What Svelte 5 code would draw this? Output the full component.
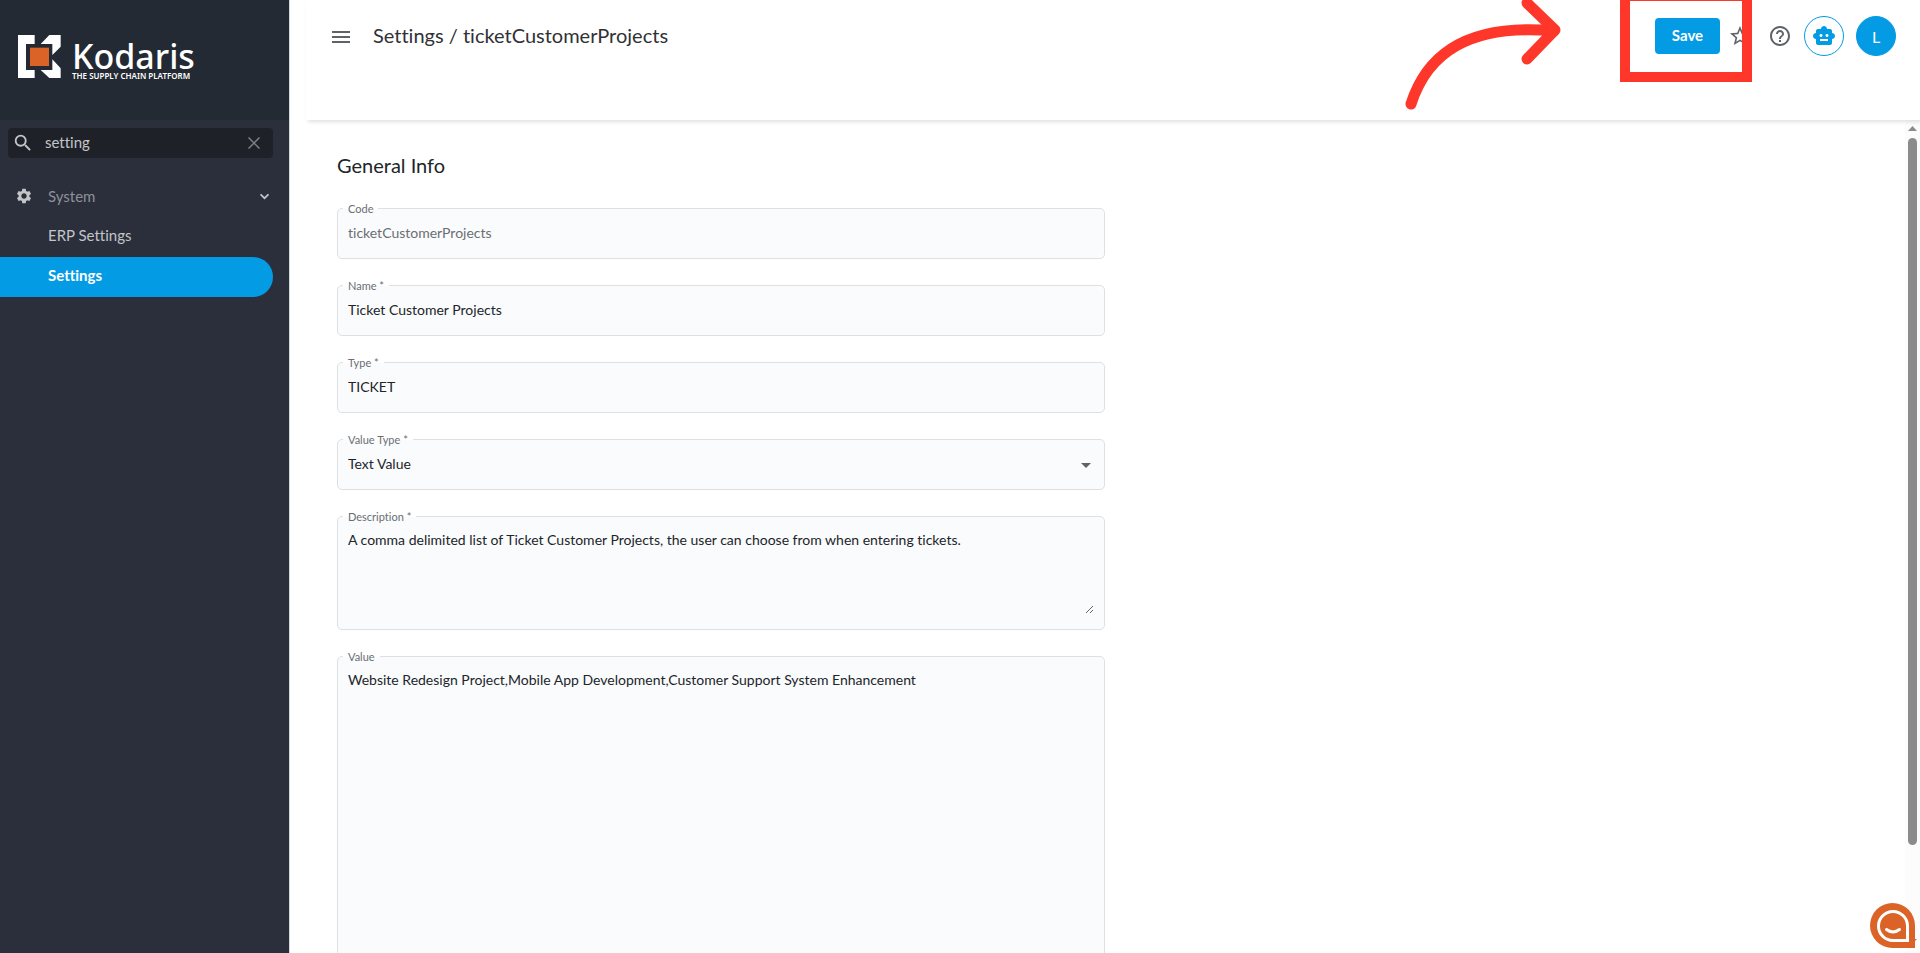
<script lang="ts">
    type Field = {
        id: string
        label: string
        value: string
        required?: boolean
        disabled?: boolean
        kind: 'input' | 'select' | 'textarea'
        size?: 'small' | 'large'
    }

    let search = $state('setting')
    let systemOpen = $state(true)

    const links = [
        { text: 'ERP Settings', active: false },
        { text: 'Settings', active: true }
    ]

    const fields: Field[] = $state([
        { id: 'code', label: 'Code', value: 'ticketCustomerProjects', kind: 'input', disabled: true },
        { id: 'name', label: 'Name', value: 'Ticket Customer Projects', kind: 'input', required: true },
        { id: 'type', label: 'Type', value: 'TICKET', kind: 'input', required: true },
        { id: 'valueType', label: 'Value Type', value: 'Text Value', kind: 'select', required: true },
        {
            id: 'description',
            label: 'Description',
            value: 'A comma delimited list of Ticket Customer Projects, the user can choose from when entering tickets.',
            kind: 'textarea',
            size: 'small',
            required: true
        },
        {
            id: 'value',
            label: 'Value',
            value: 'Website Redesign Project,Mobile App Development,Customer Support System Enhancement',
            kind: 'textarea',
            size: 'large'
        }
    ])
</script>

<div class="app">
    <aside class="sidebar">
        <a class="brand" href="#home" aria-label="Kodaris home">
            <svg class="brand-mark" viewBox="54 105 129 129" aria-hidden="true">
                <path fill="#fff" d="M54 105H104V132H78V210H104V234H54Z" />
                <path fill="#fff" d="M122 132L148 105H182V140L157 165V132Z" />
                <path fill="#fff" d="M157 178L182 205V234H148L122 210H157Z" />
                <path fill="#db6327" d="M90 143H147V198H90Z" />
            </svg>
            <span class="brand-text">
                <span class="brand-name">Kodaris</span>
                <span class="brand-tag">THE SUPPLY CHAIN PLATFORM</span>
            </span>
        </a>

        <div class="search">
            <svg class="search-icon" viewBox="0 0 24 24" aria-hidden="true">
                <path d="M15.5 14h-.79l-.28-.27A6.47 6.47 0 0 0 16 9.5 6.5 6.5 0 1 0 9.5 16c1.61 0 3.09-.59 4.23-1.57l.27.28v.79l5 4.99L20.49 19l-4.99-5zm-6 0C7.01 14 5 11.99 5 9.5S7.01 5 9.5 5 14 7.01 14 9.5 11.99 14 9.5 14z" />
            </svg>
            <input type="text" aria-label="Search menu" bind:value={search}>
            <button class="clear" aria-label="Clear search" onclick={() => (search = '')}>
                <svg viewBox="0 0 12 12" aria-hidden="true"><path d="M0.5 0.5L11.5 11.5M11.5 0.5L0.5 11.5" /></svg>
            </button>
        </div>

        <nav>
            <button class="group" aria-expanded={systemOpen} onclick={() => (systemOpen = !systemOpen)}>
                <svg class="gear" viewBox="0 0 24 24" aria-hidden="true">
                    <path d="M19.14 12.94c.04-.3.06-.61.06-.94 0-.32-.02-.64-.07-.94l2.03-1.58a.49.49 0 0 0 .12-.61l-1.92-3.32a.488.488 0 0 0-.59-.22l-2.39.96c-.5-.38-1.03-.7-1.62-.94l-.36-2.54a.484.484 0 0 0-.48-.41h-3.84c-.24 0-.43.17-.47.41l-.36 2.54c-.59.24-1.13.57-1.62.94l-2.39-.96c-.22-.08-.47 0-.59.22L2.74 8.87c-.12.21-.08.47.12.61l2.03 1.58c-.05.3-.09.63-.09.94s.02.64.07.94l-2.03 1.58a.49.49 0 0 0-.12.61l1.92 3.32c.12.22.37.29.59.22l2.39-.96c.5.38 1.03.7 1.62.94l.36 2.54c.05.24.24.41.48.41h3.84c.24 0 .44-.17.47-.41l.36-2.54c.59-.24 1.13-.56 1.62-.94l2.39.96c.22.08.47 0 .59-.22l1.92-3.32c.12-.22.07-.47-.12-.61l-2.01-1.58zM12 15.6c-1.98 0-3.6-1.62-3.6-3.6s1.62-3.6 3.6-3.6 3.6 1.62 3.6 3.6-1.62 3.6-3.6 3.6z" />
                </svg>
                <span>System</span>
                <svg class="chevron" viewBox="0 0 8 6" aria-hidden="true"><path d="M0.5 1L4 4.5L7.5 1" /></svg>
            </button>
            {#if systemOpen}
                {#each links as link}
                    <a class="link" class:active={link.active} href="#settings">{link.text}</a>
                {/each}
            {/if}
        </nav>
    </aside>

    <div class="page">
        <header>
            <button class="icon-button" aria-label="Toggle menu">
                <svg viewBox="0 0 24 24" aria-hidden="true"><path d="M3 18h18v-2H3v2zm0-5h18v-2H3v2zm0-7v2h18V6H3z" /></svg>
            </button>
            <h1>Settings / ticketCustomerProjects</h1>

            <div class="actions">
                <button class="save">Save</button>
                <button class="icon-button star" aria-label="Add to favorites">
                    <svg viewBox="0 0 24 24" aria-hidden="true">
                        <path d="M22 9.24l-7.19-.62L12 2 9.19 8.63 2 9.24l5.46 4.73L5.82 21 12 17.27 18.18 21l-1.63-7.03L22 9.24zM12 15.4l-3.76 2.27 1-4.28-3.32-2.88 4.38-.38L12 6.1l1.71 4.04 4.38.38-3.32 2.88 1 4.28L12 15.4z" />
                    </svg>
                </button>
                <button class="icon-button help" aria-label="Help">
                    <svg viewBox="0 0 24 24" aria-hidden="true">
                        <path d="M11 18h2v-2h-2v2zm1-16C6.48 2 2 6.48 2 12s4.48 10 10 10 10-4.48 10-10S17.52 2 12 2zm0 18c-4.41 0-8-3.59-8-8s3.59-8 8-8 8 3.59 8 8-3.59 8-8 8zm0-14c-2.21 0-4 1.79-4 4h2c0-1.1.9-2 2-2s2 .9 2 2c0 2-3 1.75-3 5h2c0-2.25 3-2.5 3-5 0-2.21-1.79-4-4-4z" />
                    </svg>
                </button>
                <button class="round outline" aria-label="Assistant">
                    <svg viewBox="0 0 24 24" aria-hidden="true">
                        <path d="M20 9V7c0-1.1-.9-2-2-2h-3c0-1.66-1.34-3-3-3S9 3.34 9 5H6c-1.1 0-2 .9-2 2v2c-1.66 0-3 1.34-3 3s1.34 3 3 3v4c0 1.1.9 2 2 2h12c1.1 0 2-.9 2-2v-4c1.66 0 3-1.34 3-3s-1.34-3-3-3zM7.5 11.5c0-.83.67-1.5 1.5-1.5s1.5.67 1.5 1.5S9.83 13 9 13s-1.5-.67-1.5-1.5zM16 17H8v-2h8v2zm-1-4c-.83 0-1.5-.67-1.5-1.5S14.17 10 15 10s1.5.67 1.5 1.5S15.83 13 15 13z" />
                    </svg>
                </button>
                <button class="round" aria-label="Account">L</button>
            </div>

            <div class="highlight"></div>
            <svg class="pointer" viewBox="0 0 170 112" aria-hidden="true">
                <path d="M11 104C27 54 68 23 154 31" />
                <path d="M127 3L155 30L127 59" />
            </svg>
        </header>

        <div class="body">
            <main>
                <h2>General Info</h2>
                <form>
                    {#each fields as field (field.id)}
                        <div class="field">
                            <label for={field.id}>{field.label}{field.required ? ' *' : ''}</label>
                            {#if field.kind === 'input'}
                                <input id={field.id} type="text" disabled={field.disabled} bind:value={field.value}>
                            {:else if field.kind === 'select'}
                                <select id={field.id} bind:value={field.value}>
                                    <option>Text Value</option>
                                </select>
                                <svg class="caret" viewBox="0 0 10 5" aria-hidden="true"><path d="M0 0H10L5 5Z" /></svg>
                            {:else}
                                <textarea id={field.id} class={field.size} bind:value={field.value}></textarea>
                            {/if}
                        </div>
                    {/each}
                </form>
            </main>
            <div class="scrollbar" aria-hidden="true">
                <svg viewBox="0 0 9 5"><path d="M4.5 0L9 5H0Z" /></svg>
                <div class="track"><div class="thumb"></div></div>
                <svg viewBox="0 0 9 5"><path d="M0 0H9L4.5 5Z" /></svg>
            </div>
        </div>
    </div>

    <button class="chat" aria-label="Open chat">
        <svg viewBox="0 0 45 45" aria-hidden="true">
            <path fill="#db6327" d="M22.5 0A22.5 22.5 0 0 1 45 22.5V45H22.5A22.5 22.5 0 0 1 22.5 0Z" />
            <path fill="none" stroke="#fff" stroke-width="3" d="M23 8.5A14.5 14.5 0 0 1 37.5 23V37.5H23A14.5 14.5 0 0 1 23 8.5Z" />
            <path fill="none" stroke="#fff" stroke-width="3" stroke-linecap="round" d="M16.5 26.5Q23 31.5 29.5 26.5" />
        </svg>
    </button>
</div>

<style>
    :global(body) {
        background: #fff;
    }

    .app {
        display: flex;
        height: 100vh;
        overflow: hidden;

        color: #212529;
        font-family: Lato, 'Liberation Sans', sans-serif;
        font-size: 15px;
        font-variant-ligatures: none;
    }

    .app :global(*) {
        box-sizing: border-box;
    }

    button,
    input,
    select,
    textarea {
        padding: 0;
        border: 0;
        margin: 0;

        background: none;
        color: inherit;
        font: inherit;
        font-variant-ligatures: none;
    }

    button {
        cursor: pointer;
    }

    svg {
        display: block;
        flex: none;
    }

    /* Sidebar */
    .sidebar {
        flex: none;
        width: 290px;

        border-right: 1px solid #d5d7e0;
        background: #2a2f3b;
        color: #c3c5c9;
    }

    .brand {
        display: flex;
        gap: 11px;
        height: 120px;
        padding: 35px 18px;

        background: #232a33;
        color: #fff;
        font-family: 'Noto Sans', sans-serif;
        text-decoration: none;
    }

    .brand-mark {
        width: 43px;
        height: 43px;
    }

    .brand-text {
        display: flex;
        flex-direction: column;
        padding-top: 6px;
    }

    .brand-name {
        font-size: 34px;
        font-weight: 500;
        line-height: 30px;
    }

    .brand-tag {
        padding-top: 1px;

        font-size: 8px;
        font-weight: 600;
        line-height: 8px;
        white-space: nowrap;
    }

    .search {
        display: flex;
        align-items: center;
        height: 30px;
        padding: 0 13px 0 4px;
        margin: 8px 16px 19px 8px;

        border-radius: 4px;
        background: #1e2228;
    }

    .search-icon {
        width: 22px;
        height: 22px;
        margin-right: 11px;

        fill: #c3c5c9;
    }

    .search input {
        flex: 1;
        min-width: 0;
        height: 28px;
        padding-bottom: 2px;

        outline: none;
    }

    .clear svg {
        width: 12px;
        height: 12px;

        fill: none;
        stroke: #7d8085;
        stroke-width: 1.5;
    }

    .group {
        display: flex;
        align-items: center;
        width: 100%;
        height: 40px;
        padding: 0 20px 2px 15px;

        color: #8d9199;
        text-align: left;
    }

    .group span {
        flex: 1;
        margin-left: 15px;
    }

    .gear {
        width: 18px;
        height: 18px;

        fill: #c3c5c9;
    }

    .chevron {
        width: 9px;
        height: 7px;

        fill: none;
        stroke: #c3c5c9;
        stroke-width: 1.5;
    }

    .link {
        display: block;
        height: 40px;
        padding-left: 48px;
        margin-right: 16px;

        border-radius: 0 20px 20px 0;
        color: #c3c5c9;
        line-height: 36px;
        text-decoration: none;
    }

    .link.active {
        background: #049be5;
        color: #fff;
        font-weight: 700;
    }

    /* Header */
    .page {
        position: relative;
        display: flex;
        flex: 1;
        flex-direction: column;
        min-width: 0;
    }

    header {
        position: relative;
        z-index: 1;
        display: flex;
        align-items: flex-start;
        flex: none;
        height: 120px;
        padding: 16px 24px 0 23px;
        margin-left: 16px;

        background: #fff;
        box-shadow: 2px 2px 4px rgba(0, 0, 0, .12);
    }

    .icon-button svg {
        width: 24px;
        height: 24px;

        fill: #5f6368;
    }

    header > .icon-button {
        margin-top: 9px;
    }

    h1,
    h2 {
        margin: 0;

        font-size: 20px;
        font-weight: 400;
        line-height: 24px;
    }

    h1 {
        margin: 7px 0 0 20px;

        color: #303236;
    }

    .actions {
        display: flex;
        align-items: center;
        height: 40px;
        margin-left: auto;
    }

    .save {
        width: 65px;
        height: 36px;
        padding-bottom: 2px;

        border-radius: 4px;
        background: #049be5;
        color: #fff;
        font-weight: 700;
    }

    .star {
        margin-left: 8px;
    }

    .help {
        margin-left: 16px;
    }

    .round {
        display: flex;
        align-items: center;
        justify-content: center;
        width: 40px;
        height: 40px;
        margin-left: 12px;

        border: 1px solid #049be5;
        border-radius: 50%;
        background: #049be5;
        color: #fff;
        font-size: 16px;
    }

    .round.outline {
        background: #fff;
    }

    .round svg {
        width: 24px;
        height: 24px;

        fill: #049be5;
    }

    .highlight {
        position: absolute;
        top: -9px;
        right: 168px;
        width: 132px;
        height: 91px;

        border: 10px solid #ff372b;
        pointer-events: none;
    }

    .pointer {
        position: absolute;
        top: 0;
        right: 350px;
        width: 170px;
        height: 112px;

        fill: none;
        stroke: #ff372b;
        stroke-width: 11;
        stroke-linecap: round;
        stroke-linejoin: round;
        pointer-events: none;
    }

    /* Form */
    .body {
        display: flex;
        flex: 1;
        min-height: 0;
    }

    main {
        flex: 1;
        min-width: 0;
        padding: 33px 47px 0;
        overflow: hidden;
    }

    form {
        display: flex;
        flex-direction: column;
        gap: 26px;
        max-width: 768px;
        margin-top: 31px;
    }

    .field {
        position: relative;

        border: 1px solid #dee0e3;
        border-radius: 5px;
        background: #fafbfd;
        font-size: 14px;
    }

    .field label {
        position: absolute;
        top: -7px;
        left: 5px;

        padding: 0 5px;

        background: linear-gradient(#fff 7px, #fafbfd 7px);
        color: #6b6e73;
        font-size: 11px;
        line-height: 14px;
    }

    .field input,
    .field select {
        display: block;
        width: 100%;
        height: 49px;
        padding: 0 10px 3px;

        outline: none;
        appearance: none;
    }

    .field input:disabled {
        color: #6b6e73;
    }

    .caret {
        position: absolute;
        top: 23px;
        right: 13px;

        width: 10px;
        height: 5px;

        fill: #5f6368;
        pointer-events: none;
    }

    textarea {
        display: block;
        width: calc(100% - 20px);
        margin: 14px 10px 15px;

        line-height: 18px;
        outline: none;
        resize: vertical;
    }

    .small {
        height: 83px;
    }

    .large {
        height: 400px;
    }

    .scrollbar {
        display: flex;
        flex-direction: column;
        align-items: center;
        width: 15px;
        padding: 6px 0 9px;

        background: #fcfcfc;
    }

    .scrollbar svg {
        width: 9px;
        height: 5px;

        fill: #8b8b8b;
    }

    .track {
        flex: 1;
        padding: 7px 0;
    }

    .thumb {
        width: 9px;
        height: 89%;

        border-radius: 5px;
        background: #8b8b8b;
    }

    .chat {
        position: fixed;
        right: 5px;
        bottom: 5px;
        z-index: 2;
    }

    .chat svg {
        width: 45px;
        height: 45px;
    }
</style>
